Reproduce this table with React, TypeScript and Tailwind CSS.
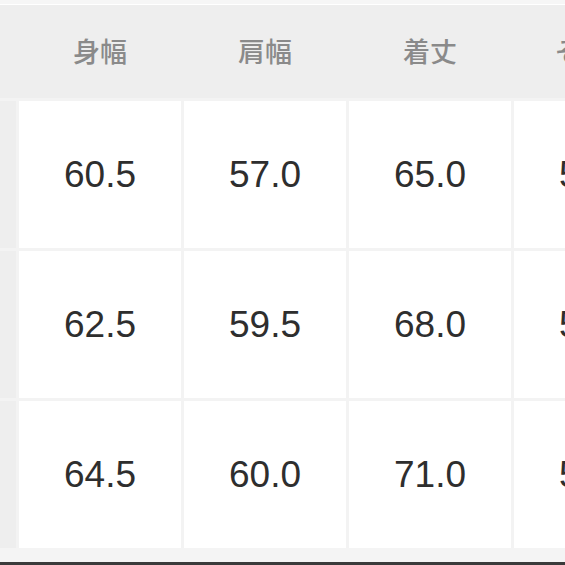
import React from 'react';

const headers = ['身幅', '肩幅', '着丈', 'そで丈'];
const rows = [
  ['60.5', '57.0', '65.0', '58.0'],
  ['62.5', '59.5', '68.0', '59.0'],
  ['64.5', '60.0', '71.0', '59.5'],
];

const App: React.FC = () => {
  return (
    <div className="w-[565px] h-[565px] overflow-hidden flex flex-col bg-[#f4f4f4]">
      <div className="h-[4px] bg-[#f6f6f6]" />
      <div className="h-[1px] bg-white" />
      <div className="flex h-[93px] bg-[#eeeeee] shrink-0">
        <div className="w-[19px] shrink-0" />
        {headers.map((h) => (
          <div
            key={h}
            className="w-[162px] shrink-0 mr-[3px] flex items-center justify-center text-[27px] font-medium text-[#8a8a8a] font-['Noto_Sans_CJK_JP',sans-serif]"
          >
            {h}
          </div>
        ))}
      </div>
      <div className="flex flex-col gap-[3px] pt-[3px] bg-[#f3f3f3]">
        {rows.map((r, i) => (
          <div key={i} className="flex gap-[3px] h-[147px] shrink-0">
            <div className="w-[16px] shrink-0 bg-[#eeeeee]" />
            {r.map((v, j) => (
              <div
                key={j}
                className="w-[162px] shrink-0 bg-white flex items-center justify-center text-[37px] text-[#2e2e2e] font-['Liberation_Sans',Arial,sans-serif]"
              >
                {v}
              </div>
            ))}
          </div>
        ))}
      </div>
      <div className="h-[14px] bg-[#f4f4f4] shrink-0" />
      <div className="h-[3px] bg-[#3a3a3a] shrink-0" />
    </div>
  );
};

export default App;
